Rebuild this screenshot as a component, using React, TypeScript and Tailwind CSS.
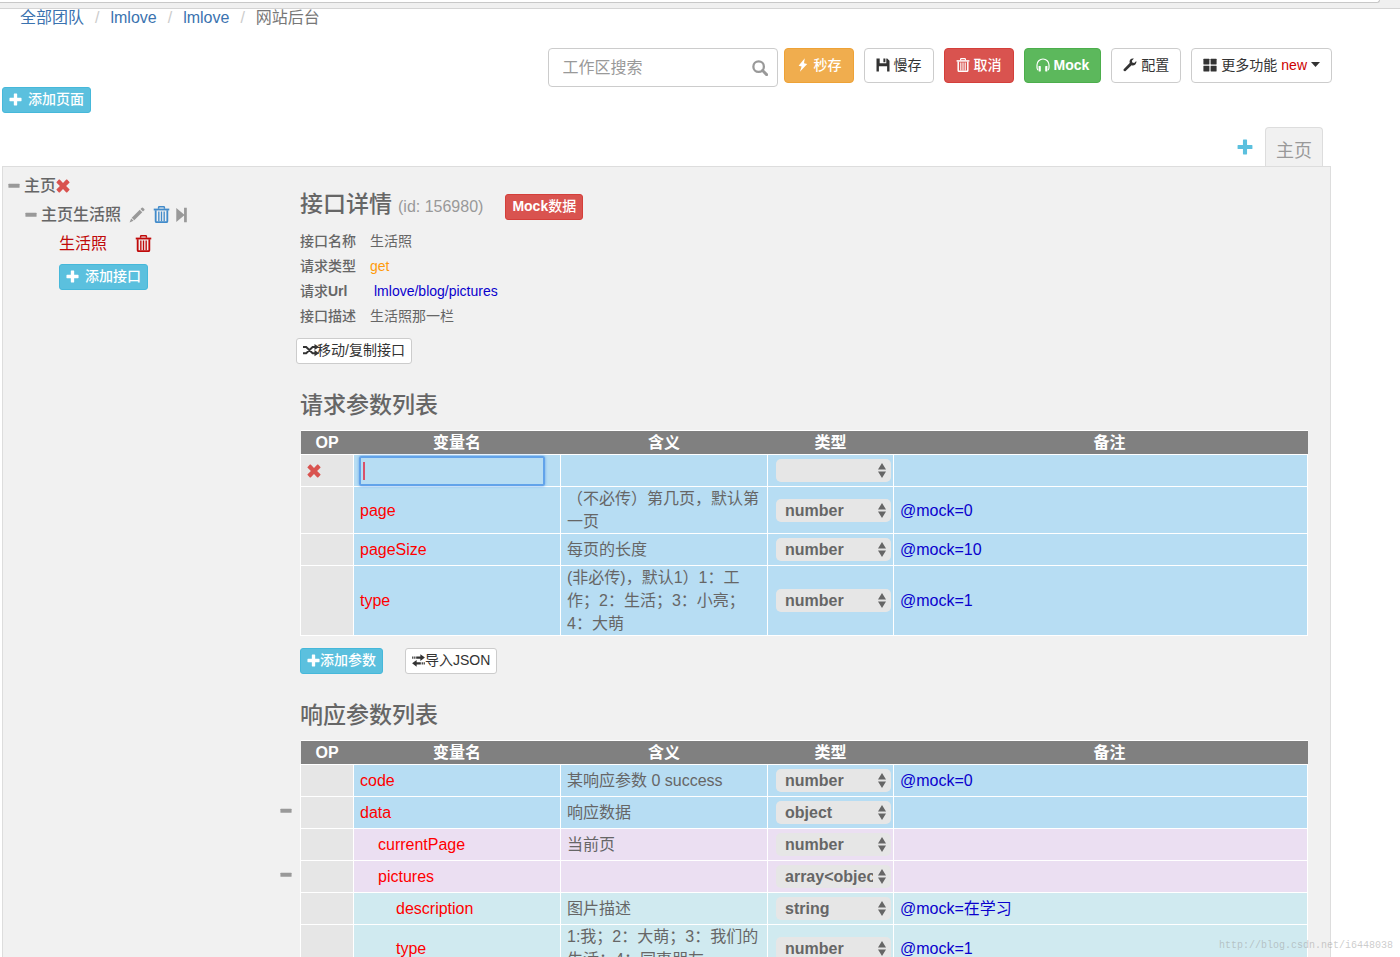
import { ReactNode, useState } from 'react'

type IconProps = { className?: string }

const Svg = ({ className = 'size-3.5', children }: { className?: string; children: ReactNode }) => (
  <svg viewBox="0 0 14 14" className={`shrink-0 ${className}`} fill="currentColor" aria-hidden="true">
    {children}
  </svg>
)

const PlusIcon = ({ className = 'size-[13px]' }: IconProps) => (
  <Svg className={className}>
    <path d="M5.7.5h2.6q.5 0 .5.5v4.200H13q.5 0 .5.5v2.600q0 .5-.5.5H8.800V13q0 .5-.5.5H5.700q-.5 0-.5-.5V8.800H1q-.5 0-.5-.5V5.700q0-.5.5-.5h4.200V1q0-.5.5-.5z" />
  </Svg>
)

const MinusIcon = ({ className }: IconProps) => (
  <Svg className={className}>
    <rect x=".5" y="4.500" width="13" height="4.500" rx=".6" />
  </Svg>
)

const RemoveIcon = ({ className }: IconProps) => (
  <Svg className={className}>
    <path d="M3.700.600 7 3.900 10.300.600q.4-.4.800 0l2.300 2.300q.4.400 0 .800L10.100 7l3.300 3.300q.4.400 0 .800l-2.300 2.300q-.4.400-.8 0L7 10.100l-3.300 3.300q-.4.400-.8 0L.600 11.100q-.4-.4 0-.8L3.900 7 .600 3.700q-.4-.4 0-.8L2.900.600q.4-.4.800 0z" />
  </Svg>
)

const SearchIcon = ({ className }: IconProps) => (
  <Svg className={className}>
    <circle cx="5.800" cy="5.800" r="4.600" fill="none" stroke="currentColor" strokeWidth="2" />
    <path d="m9.200 9.200 3.600 3.600" stroke="currentColor" strokeWidth="2.500" strokeLinecap="round" />
  </Svg>
)

const BoltIcon = ({ className }: IconProps) => (
  <Svg className={className}>
    <path d="M8.800.300 2.600 7.800l3 .8-1.700 5.200 7.300-7.700-3.200-.8z" />
  </Svg>
)

const FloppyIcon = ({ className }: IconProps) => (
  <Svg className={className}>
    <path d="M.5.500h3.200v4.800h6.600V.500h.9l2.300 2.300v10.700h-2.400V8.300H2.900v5.200H.5zM7.400.500h2v3.800h-2z" />
  </Svg>
)

const TrashIcon = ({ className }: IconProps) => (
  <Svg className={className}>
    <g fill="none" stroke="currentColor">
      <path d="M4.600 2.300V1.200q0-.6.6-.6h3.600q.6 0 .6.600v1.100" strokeWidth="1.200" />
      <path d="M.6 2.900h12.800" strokeWidth="1.500" />
      <path d="M2.200 3.500v9q0 .8.8.8h8q.8 0 .8-.8v-9" strokeWidth="1.500" />
      <path d="M4.800 4.500v8M7 4.500v8M9.200 4.500v8" strokeWidth="1.100" />
    </g>
  </Svg>
)

const HeadphonesIcon = ({ className }: IconProps) => (
  <Svg className={className}>
    <path d="M2 12.100Q1 11 1 9.500V7a6 6 0 0 1 12 0v2.500q0 1.500-1 2.600" fill="none" stroke="currentColor" strokeWidth="1.200" />
    <rect x="2.600" y="8" width="2.200" height="5.500" rx=".4" />
    <rect x="9.200" y="8" width="2.200" height="5.500" rx=".4" />
  </Svg>
)

const WrenchIcon = ({ className }: IconProps) => (
  <Svg className={className}>
    <path d="M13.300 3.100 11.200 5 9.300 4.500 8.900 2.700l2-2.100Q8.600.100 7.300 1.600 6.100 3 6.700 5L.7 11.200q-.7.8.1 1.600.9.900 1.800.1l6-5.700q2.100.6 3.700-.8 1.500-1.400 1-3.300z" />
  </Svg>
)

const GridIcon = ({ className }: IconProps) => (
  <Svg className={className}>
    <rect x=".4" y=".8" width="6" height="5.700" rx=".4" />
    <rect x="7.600" y=".8" width="6" height="5.700" rx=".4" />
    <rect x=".4" y="7.700" width="6" height="5.700" rx=".4" />
    <rect x="7.600" y="7.700" width="6" height="5.700" rx=".4" />
  </Svg>
)

const PencilIcon = ({ className }: IconProps) => (
  <Svg className={className}>
    <path d="M11.200.600q.5-.5 1 0l1.200 1.200q.5.500 0 1l-1.200 1.200L10 1.800zM9.400 2.400l2.200 2.200-7 7-2.200-2.200zM1.900 10l2.100 2.100-3.500 1.400z" />
  </Svg>
)

const StepForwardIcon = ({ className }: IconProps) => (
  <Svg className={className}>
    <path d="M2 .800 8.800 6.600V.700h2.400v12.600H8.800V7.400L2 13.200z" />
  </Svg>
)

const ShuffleIcon = ({ className = 'h-3.5 w-4' }: IconProps) => (
  <svg viewBox="0 0 16 14" className={`shrink-0 ${className}`} aria-hidden="true">
    <path d="M0 4h3.200L9.600 10.200H12M0 10.200h3.200L9.600 4H12" fill="none" stroke="currentColor" strokeWidth="1.900" />
    <path d="M11.500.900 16 4l-4.500 3.100zM11.500 7.100 16 10.200l-4.500 3.100z" fill="currentColor" />
  </svg>
)

const TransferIcon = ({ className = 'size-[13px]' }: IconProps) => (
  <Svg className={className}>
    <path d="M4.500 2.700H9V.200l4.900 3.700L9 7.500V5H4.500zM.2 2.700h1.300V5H.2zM2.400 2.700h1.300V5H2.400zM9.500 11.200H5v2.500L.1 10 5 6.400v2.500h4.500zM10.400 8.900h1.300v2.300h-1.300zM12.500 8.900h1.300v2.300h-1.300z" />
  </Svg>
)

const smallBtn = 'inline-flex h-[26px] items-center rounded-[3px] border px-1.5 pb-0.5 text-sm'
const toolBtn = 'flex h-[35px] items-center gap-1 rounded border px-[11px] pb-0.5 text-sm'
const sectionTitle = 'mt-[26px] mb-2.5 text-[23px] leading-[30px] font-medium'

const TYPES = ['', 'number', 'string', 'object', 'array<object>', 'boolean']

type Param = {
  name: string
  meaning?: string
  type: string
  remark?: string
  depth?: number
  toggle?: boolean
  editing?: boolean
}

const requestParams: Param[] = [
  { name: '', type: '', editing: true },
  { name: 'page', meaning: '（不必传）第几页，默认第一页', type: 'number', remark: '@mock=0' },
  { name: 'pageSize', meaning: '每页的长度', type: 'number', remark: '@mock=10' },
  { name: 'type', meaning: '(非必传)，默认1）1：工作；2：生活；3：小亮；4：大萌', type: 'number', remark: '@mock=1' },
]

const responseParams: Param[] = [
  { name: 'code', meaning: '某响应参数 0 success', type: 'number', remark: '@mock=0' },
  { name: 'data', meaning: '响应数据', type: 'object', toggle: true },
  { name: 'currentPage', meaning: '当前页', type: 'number', depth: 1 },
  { name: 'pictures', type: 'array<object>', depth: 1, toggle: true },
  { name: 'description', meaning: '图片描述', type: 'string', remark: '@mock=在学习', depth: 2 },
  { name: 'type', meaning: '1:我；2：大萌；3：我们的生活；4：同事朋友', type: 'number', remark: '@mock=1', depth: 2 },
]

const rowColors = ['bg-[#b7ddf3]', 'bg-[#ebdff2]', 'bg-[#d0eaf0]']
const indents = ['pl-1.5', 'pl-6', 'pl-[42px]']

const TypeSelect = ({ value, label }: { value: string; label: string }) => {
  const [type, setType] = useState(value)

  return (
    <div className="relative">
      <select
        aria-label={label}
        value={type}
        onChange={(e) => setType(e.target.value)}
        className="block h-[23px] w-full appearance-none rounded-[5px] bg-[#e6e6e6] pr-[18px] pl-[9px] font-bold text-[#666] outline-none"
      >
        {TYPES.map((t) => (
          <option key={t} value={t}>{t}</option>
        ))}
      </select>
      <svg viewBox="0 0 8 15" className="pointer-events-none absolute top-1 right-[5px] h-[15px] w-2" fill="#666" aria-hidden="true">
        <path d="M4 0 8 6.500H0zM4 15 0 8.500h8z" />
      </svg>
    </div>
  )
}

const ParamTable = ({ rows }: { rows: Param[] }) => (
  <table className="w-full table-fixed border-collapse leading-[23px]">
    <colgroup>
      <col className="w-[53px]" />
      <col className="w-[207px]" />
      <col className="w-[207px]" />
      <col className="w-[126px]" />
      <col />
    </colgroup>
    <thead>
      <tr className="bg-[#808080] text-white">
        {['OP', '变量名', '含义', '类型', '备注'].map((title) => (
          <th key={title} className="h-6 border-y border-white p-0 font-bold last:pl-[18px]">{title}</th>
        ))}
      </tr>
    </thead>
    <tbody>
      {rows.map((row, i) => (
        <tr key={i} className={rowColors[row.depth ?? 0]}>
          <td className="relative h-8 border border-white bg-[#e6e6e6] py-0 pr-0 pl-1.5">
            {row.toggle && (
              <button aria-label={`收起 ${row.name}`} className="absolute top-2 -left-[21px] text-[#999]">
                <MinusIcon className="size-3" />
              </button>
            )}
            {row.editing && (
              <button aria-label="删除参数" className="block text-[#d9534f]">
                <RemoveIcon />
              </button>
            )}
          </td>
          {row.editing ? (
            <td className="border border-white py-0 pr-[15px] pl-[5px]">
              <div className="relative">
                <input
                  aria-label="变量名"
                  className="block h-[30px] w-full rounded-[2px] border-2 border-[#62a3ea] bg-transparent px-1 text-[#f00] caret-transparent shadow-[0_0_3px_#62a3ea] outline-none"
                />
                <span className="absolute top-1.5 left-1 h-[18px] w-0.5 bg-[#d9506a]" />
              </div>
            </td>
          ) : (
            <td className={`border border-white py-0 pr-0 text-[#f00] ${indents[row.depth ?? 0]}`}>{row.name}</td>
          )}
          <td className="border border-white px-1.5 py-0">{row.meaning}</td>
          <td className="border border-white py-0 pr-0.5 pl-2">
            <TypeSelect value={row.type} label={`${row.name} 类型`} />
          </td>
          <td className="border border-white px-1.5 py-0 text-[#0a00cd]">{row.remark}</td>
        </tr>
      ))}
    </tbody>
  </table>
)

const Sidebar = () => (
  <aside className="w-[294px] shrink-0 pt-1 pl-[5px] leading-[29px]">
    <div className="flex items-center font-medium">
      <button aria-label="收起" className="mr-1 text-[#999]"><MinusIcon className="size-3" /></button>
      主页
      <button aria-label="删除页面" className="text-[#d9534f]"><RemoveIcon /></button>
    </div>
    <div className="flex items-center pl-[17px] font-medium">
      <button aria-label="收起" className="mr-1 text-[#999]"><MinusIcon className="size-3" /></button>
      主页生活照
      <button aria-label="编辑" className="ml-2 text-[#999]"><PencilIcon className="size-4" /></button>
      <button aria-label="删除分组" className="ml-2 text-[#428bca]"><TrashIcon className="size-[17px]" /></button>
      <button aria-label="移动" className="ml-1 text-[#999]"><StepForwardIcon className="size-4" /></button>
    </div>
    <div className="flex items-center pl-[51px] text-[#c00a0a]">
      <a href="#pictures">生活照</a>
      <button aria-label="删除接口" className="ml-7"><TrashIcon className="size-[17px]" /></button>
    </div>
    <div className="flex pt-1.5 pl-[51px]">
      <button className={`${smallBtn} gap-1.5 border-[#46b8da] bg-[#5bc0de] font-medium text-white`}>
        <PlusIcon />
        添加接口
      </button>
    </div>
  </aside>
)

const Detail = ({ label, children }: { label: ReactNode; children: ReactNode }) => (
  <div className="flex h-[25px] items-center">
    <dt className="w-[70px] font-medium">{label}</dt>
    <dd>{children}</dd>
  </div>
)

const App = () => {
  return (
    <div className="relative h-screen overflow-hidden bg-white font-['Liberation_Sans','Noto_Sans_CJK_SC',sans-serif] text-base text-[#666]">
      <header className="relative z-10 h-[9px] border-b border-[#d4d4d4] bg-[#f0f0f0]">
        <div className="mr-5 h-[3px] rounded-br border-r border-b border-[#c8c8c8] bg-white" />
      </header>

      <nav className="-mt-[3px] flex pl-5 leading-6">
        <a href="#teams" className="text-[#3b73af]">全部团队</a>
        <span className="px-[11px] text-[#ccc]">/</span>
        <a href="#team" className="text-[#3b73af]">lmlove</a>
        <span className="px-[11px] text-[#ccc]">/</span>
        <a href="#product" className="text-[#3b73af]">lmlove</a>
        <span className="px-[11px] text-[#ccc]">/</span>
        <span className="text-[#777]">网站后台</span>
      </nav>

      <div className="mt-[18px] mr-[68px] flex items-start justify-end gap-2.5">
        <div className="relative -mr-1">
          <input
            type="text"
            aria-label="工作区搜索"
            placeholder="工作区搜索"
            className="block h-[39px] w-[230px] rounded border border-[#ccc] pr-9 pl-3.5 outline-none placeholder:text-[#999]"
          />
          <SearchIcon className="absolute top-3 right-2.5 size-4 text-[#999]" />
        </div>
        <button className={`${toolBtn} border-[#eea236] bg-[#f0ad4e] font-medium text-white`}><BoltIcon />秒存</button>
        <button className={`${toolBtn} border-[#ccc] bg-white text-[#333]`}><FloppyIcon />慢存</button>
        <button className={`${toolBtn} border-[#d43f3a] bg-[#d9534f] font-medium text-white`}><TrashIcon />取消</button>
        <button className={`${toolBtn} border-[#4cae4c] bg-[#5cb85c] font-bold text-white`}><HeadphonesIcon />Mock</button>
        <button className={`${toolBtn} border-[#ccc] bg-white text-[#333]`}><WrenchIcon />配置</button>
        <button className={`${toolBtn} border-[#ccc] bg-white text-[#333]`}>
          <GridIcon />
          更多功能
          <span className="text-[#c00]">new</span>
          <svg viewBox="0 0 9 5" className="h-[5px] w-[9px]" fill="currentColor" aria-hidden="true"><path d="M0 0h9L4.500 5z" /></svg>
        </button>
      </div>

      <div className="flex pl-0.5">
        <button className={`${smallBtn} gap-1.5 border-[#46b8da] bg-[#5bc0de] font-medium text-white`}>
          <PlusIcon />
          添加页面
        </button>
      </div>

      <div className="mt-3.5 mr-[77px] flex items-center justify-end gap-3">
        <button aria-label="添加标签" className="text-[#5bc0de]"><PlusIcon className="size-4" /></button>
        <button className="h-[39px] rounded-t border border-b-0 border-[#ddd] bg-[#f1f1f1] px-2.5 pt-2 text-lg text-[#999]">主页</button>
      </div>

      <main className="mr-[69px] ml-0.5 flex border border-[#ddd] bg-[#f1f1f1]">
        <Sidebar />
        <section className="min-w-0 flex-1 pt-[27px] pr-[22px] pb-10 pl-[3px]">
          <div className="flex h-[26px] items-center">
            <h3 className="pb-1.5 text-[23px] font-medium">接口详情</h3>
            <span className="ml-1.5 font-medium text-[#999]">(id: 156980)</span>
            <button className={`${smallBtn} ml-[22px] border-[#d43f3a] bg-[#d9534f] font-medium text-white`}>
              <span className="font-bold">Mock</span>数据
            </button>
          </div>

          <dl className="mt-2 text-sm">
            <Detail label="接口名称">生活照</Detail>
            <Detail label="请求类型"><span className="text-[#ff9a0a]">get</span></Detail>
            <Detail label={<>请求<b>Url</b></>}>
              <a href="#url" className="pl-1 text-[#0a00cd]">lmlove/blog/pictures</a>
            </Detail>
            <Detail label="接口描述">生活照那一栏</Detail>
          </dl>

          <div className="mt-[10px] -ml-1 flex">
            <button className={`${smallBtn} border-[#ccc] bg-white text-[#333]`}>
              <ShuffleIcon className="-mr-0.5 h-3.5 w-4" />
              移动/复制接口
            </button>
          </div>

          <h3 className={sectionTitle}>请求参数列表</h3>
          <ParamTable rows={requestParams} />
          <div className="mt-3 flex gap-[22px]">
            <button className={`${smallBtn} border-[#46b8da] bg-[#5bc0de] font-medium text-white`}>
              <PlusIcon />
              添加参数
            </button>
            <button className={`${smallBtn} border-[#ccc] bg-white text-[#333]`}>
              <TransferIcon />
              导入JSON
            </button>
          </div>

          <h3 className={sectionTitle}>响应参数列表</h3>
          <ParamTable rows={responseParams} />
        </section>
      </main>

      <footer className="absolute right-[7px] bottom-1 font-['Liberation_Mono',monospace] text-[10px] text-[#999]/50">
        http://blog.csdn.net/i6448038
      </footer>
    </div>
  )
}

export default App
